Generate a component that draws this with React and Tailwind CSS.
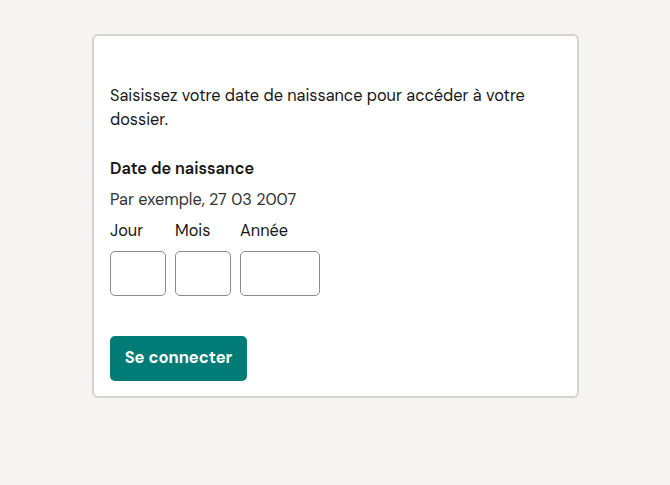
export default function App() {
  return (
    <div
      className="min-h-[485px] w-full bg-[#f5f4f2] pt-[34px]"
      style={{ fontFamily: '"DM Sans", Inter, "Open Sans", sans-serif' }}
    >
      <div className="ml-[92px] w-[487px] rounded-[6px] border-2 border-[#d4d3d1] bg-white px-[16px] pt-[48px] pb-[15px] text-[#161616]">
        <p className="text-[16.3px] leading-[24px]">
          Saisissez votre date de naissance pour accéder à votre dossier.
        </p>
        <p className="mt-[25px] text-[16.3px] font-semibold leading-[24px]">Date de naissance</p>
        <p className="mt-[7px] text-[16.3px] leading-[24px] text-[#333333]">Par exemple, 27 03 2007</p>
        <div className="mt-[7px] flex gap-[9px]">
          <div className="flex flex-col gap-[8px]">
            <span className="text-[16.3px] leading-[24px]">Jour</span>
            <div className="h-[45px] w-[56px] rounded-[5px] border-[1.5px] border-[#8a8a8a]" />
          </div>
          <div className="flex flex-col gap-[8px]">
            <span className="text-[16.3px] leading-[24px]">Mois</span>
            <div className="h-[45px] w-[56px] rounded-[5px] border-[1.5px] border-[#8a8a8a]" />
          </div>
          <div className="flex flex-col gap-[8px]">
            <span className="text-[16.3px] leading-[24px]">Année</span>
            <div className="h-[45px] w-[80px] rounded-[5px] border-[1.5px] border-[#8a8a8a]" />
          </div>
        </div>
        <button className="mt-[40px] h-[45px] w-[137px] rounded-[5px] bg-[#007b76] text-[16.5px] font-bold text-white">
          Se connecter
        </button>
      </div>
    </div>
  );
}
